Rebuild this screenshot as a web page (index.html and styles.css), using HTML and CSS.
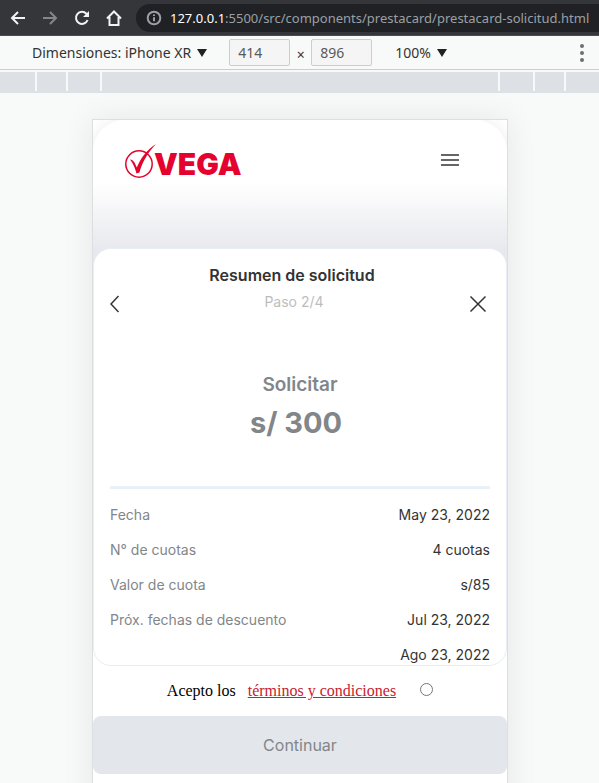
FILE: index.html
```html
<!DOCTYPE html>
<html lang="es">
<head>
<meta charset="utf-8">
<meta name="viewport" content="width=device-width, initial-scale=1">
<title>Prestacard - Resumen de solicitud</title>
<link rel="stylesheet" href="styles.css">
</head>
<body>
<header class="browser">
  <button class="nav" type="button" aria-label="Atrás"><svg viewBox="0 0 16 16"><path d="M15 8H2M8 2 2 8l6 6"/></svg></button>
  <button class="nav nav-off" type="button" aria-label="Adelante"><svg viewBox="0 0 16 16"><path d="M1 8h13M8 2l6 6-6 6"/></svg></button>
  <button class="nav" type="button" aria-label="Recargar"><svg viewBox="0 0 16 16"><path d="M13.6 10A6 6 0 1 1 12.4 3.8L14 5.5"/><path class="solid" d="M15 1v6H9z"/></svg></button>
  <button class="nav" type="button" aria-label="Inicio"><svg viewBox="0 0 16 16"><path d="M1 8.5 8 1.5l7 7M3.5 7v8h9V7"/></svg></button>
  <div class="address">
    <svg class="info" viewBox="0 0 16 16"><circle cx="8" cy="8" r="6.3"/><path d="M8 7.2v4M8 4.5v1.6"/></svg>
    <span class="url"><b>127.0.0.1</b>:5500/src/components/prestacard/prestacard-solicitud.html</span>
  </div>
</header>
<div class="device-bar">
  <button class="menu" type="button">Dimensiones: iPhone XR<i class="caret"></i></button>
  <input class="size" type="text" value="414" aria-label="Ancho">
  <span class="times">×</span>
  <input class="size" type="text" value="896" aria-label="Alto">
  <button class="menu zoom" type="button">100%<i class="caret"></i></button>
  <button class="more" type="button" aria-label="Más opciones"><svg viewBox="0 0 4 18"><circle cx="2" cy="2" r="2"/><circle cx="2" cy="9" r="2"/><circle cx="2" cy="16" r="2"/></svg></button>
</div>
<div class="ruler"><i></i><i></i><i></i><i></i><i></i><i></i><i></i></div>
<div class="canvas">
  <main class="phone">
    <header class="top">
      <svg class="logo" viewBox="0 0 118 36" role="img" aria-label="Vega">
        <circle cx="14" cy="20" r="13.2"/>
        <path d="M5 15.500c2 .2 3.700 1.500 4.800 3.500l2 4.500C15.500 14.500 22 5.500 31 0 24.500 6.500 17 18 14.500 28.500l-3 1C10 24.500 8.500 19.500 5 15.500z"/>
        <text x="29" y="31">VEGA</text>
      </svg>
      <button class="burger" type="button" aria-label="Menú"><i></i><i></i><i></i></button>
    </header>
    <section class="card">
      <h1>Resumen de solicitud</h1>
      <div class="step">
        <button class="icon" type="button" aria-label="Volver"><svg viewBox="0 0 9 18"><path d="M8.500 1 1 9l7.500 8"/></svg></button>
        <span>Paso 2/4</span>
        <button class="icon close" type="button" aria-label="Cerrar"><svg viewBox="0 0 18 18"><path d="m1.500 1.500 15 15M16.500 1.500l-15 15"/></svg></button>
      </div>
      <div class="amount">
        <h2>Solicitar</h2>
        <p>s/ 300</p>
      </div>
      <dl>
        <div><dt>Fecha</dt><dd>May 23, 2022</dd></div>
        <div><dt>N° de cuotas</dt><dd>4 cuotas</dd></div>
        <div><dt>Valor de cuota</dt><dd>s/85</dd></div>
        <div><dt>Próx. fechas de descuento</dt><dd>Jul 23, 2022</dd></div>
        <div><dt></dt><dd>Ago 23, 2022</dd></div>
      </dl>
    </section>
    <div class="terms">
      <label for="accept">Acepto los</label>
      <a href="#terminos">términos y condiciones</a>
      <input id="accept" type="radio">
    </div>
    <button class="continue" type="button">Continuar</button>
  </main>
</div>
</body>
</html>
```
FILE: styles.css
```css
* { box-sizing: border-box; }
html, body { height: 100%; }
body {
  margin: 0;
  display: flex;
  flex-direction: column;
  overflow: hidden;
  background: #f7faf8;
  font-family: "Noto Sans", sans-serif;
}
button {
  border: 0;
  padding: 0;
  background: none;
  font: inherit;
  color: inherit;
}
svg { display: block; }
h1, h2, p, dl, dd { margin: 0; }

.browser {
  flex: none;
  display: flex;
  align-items: center;
  height: 36px;
  padding-left: 10px;
  gap: 16px;
  background: #35363a;
  border-bottom: 1px solid #4a4b4e;
}
.nav { width: 16px; height: 16px; color: #f1f3f4; }
.nav svg { width: 16px; height: 16px; fill: none; stroke: currentColor; stroke-width: 2; }
.nav .solid { fill: currentColor; stroke: none; }
.nav-off { color: #85868a; }
.address {
  flex: 1;
  min-width: 0;
  display: flex;
  align-items: center;
  gap: 8px;
  height: 28px;
  margin-left: -2px;
  padding-left: 10px;
  border-radius: 14px 0 0 14px;
  background: #202124;
}
.info { flex: none; width: 16px; height: 16px; fill: none; stroke: #9aa0a6; stroke-width: 2; }
.url { white-space: nowrap; font-size: 13px; color: #9aa0a6; }
.url b { font-weight: 400; color: #fff; }

.device-bar {
  flex: none;
  display: flex;
  align-items: center;
  height: 34px;
  padding: 0 15px 0 32px;
  border-bottom: 1px solid #cbcdd1;
  font-size: 14px;
  color: #333;
}
.menu { display: flex; align-items: center; gap: 6px; white-space: nowrap; }
.caret { border: 5px solid transparent; border-top: 8px solid #202124; border-bottom: 0; }
.size {
  width: 61px;
  height: 27px;
  padding: 0 8px;
  border: 1px solid #cbcdd1;
  border-radius: 2px;
  background: #f5f5f5;
  font: inherit;
  color: #5a5a5a;
}
.menu + .size { margin-left: 22px; }
.times { width: 21px; text-align: center; padding-top: 4px; line-height: 20px; }
.zoom { margin-left: 23px; }
.more { margin-left: auto; }
.more svg { width: 4px; height: 18px; fill: #6e6e6e; }

.ruler {
  flex: none;
  display: grid;
  grid-template-columns: 35fr 29fr 32fr 396fr 33fr 29fr 33fr;
  gap: 2px;
  height: 23px;
  padding-bottom: 2px;
  border-top: 2px solid #f7faf8;
  background: linear-gradient(#dde0e5, #dde0e5) bottom / 100% 2px no-repeat, #f7faf8;
}
.ruler i { background: #dde0e5; }

.canvas {
  flex: 1;
  min-height: 0;
  padding: 26px 91px 0 92px;
  overflow: hidden;
}
.phone {
  height: 896px;
  overflow: hidden;
  border: 1px solid #dcdfe0;
  background: #fff;
  box-shadow: 0 0 30px rgba(0, 0, 0, 0.08);
  font-family: "Inter", sans-serif;
}
.top {
  display: flex;
  justify-content: space-between;
  align-items: flex-start;
  height: 160px;
  margin-bottom: -32px;
  padding: 24px 48px 0 32px;
  border-radius: 32px 32px 0 0;
  background: linear-gradient(#fff 62px, #e7e8ed 132px);
  box-shadow: 0 0 16px rgba(0, 0, 0, 0.08);
}
.logo { width: 118px; height: 36px; fill: #e4032e; overflow: visible; }
.logo circle { fill: none; stroke: #e4032e; stroke-width: 1.500; }
.logo text { font: 900 30px "Inter", sans-serif; }
.burger { display: grid; gap: 3px; width: 18px; margin-top: 10px; }
.burger i { height: 2px; background: #666; }

.card {
  height: 418px;
  overflow: hidden;
  padding: 16px;
  border: 1px solid #e9edf5;
  border-radius: 18px;
  background: #fff;
  color: #333;
}
.card h1 {
  padding-right: 16px;
  text-align: center;
  font-size: 16px;
  line-height: 20px;
  font-weight: 600;
}
.step {
  display: flex;
  justify-content: space-between;
  align-items: flex-start;
  margin-top: 6px;
  line-height: 22px;
  font-size: 14px;
  color: #bdbdbd;
}
.icon { padding-top: 4px; color: #333; }
.icon svg { width: 9px; height: 18px; fill: none; stroke: currentColor; stroke-width: 1.500; }
.close { padding-right: 3px; }
.close svg { width: 18px; }
.amount {
  height: 166px;
  padding: 60px 0 0;
  text-align: center;
  color: #828689;
}
.amount p { margin-top: 8px; padding-right: 8px; font-size: 29px; line-height: 36px; font-weight: 700; }
.amount h2 { font-size: 19px; line-height: 24px; font-weight: 600; }
dl {
  padding-top: 8px;
  border-top: 3px solid #e9f0f6;
  margin-top: 7px;
  font-size: 14px;
}
dl div { display: flex; justify-content: space-between; height: 35px; line-height: 36px; }
dt { color: #828689; }

.terms {
  display: flex;
  justify-content: center;
  align-items: center;
  height: 50px;
  font-family: "Liberation Serif", serif;
  font-size: 16px;
  color: #000;
}
.terms a { margin-left: 12px; color: #c8202f; }
.terms input { width: 13px; height: 13px; margin: 0 0 4px 24px; }
.continue {
  display: block;
  width: 100%;
  height: 58px;
  border-radius: 8px;
  background: #e3e6ea;
  font-size: 16px;
  color: #828689;
}
```
